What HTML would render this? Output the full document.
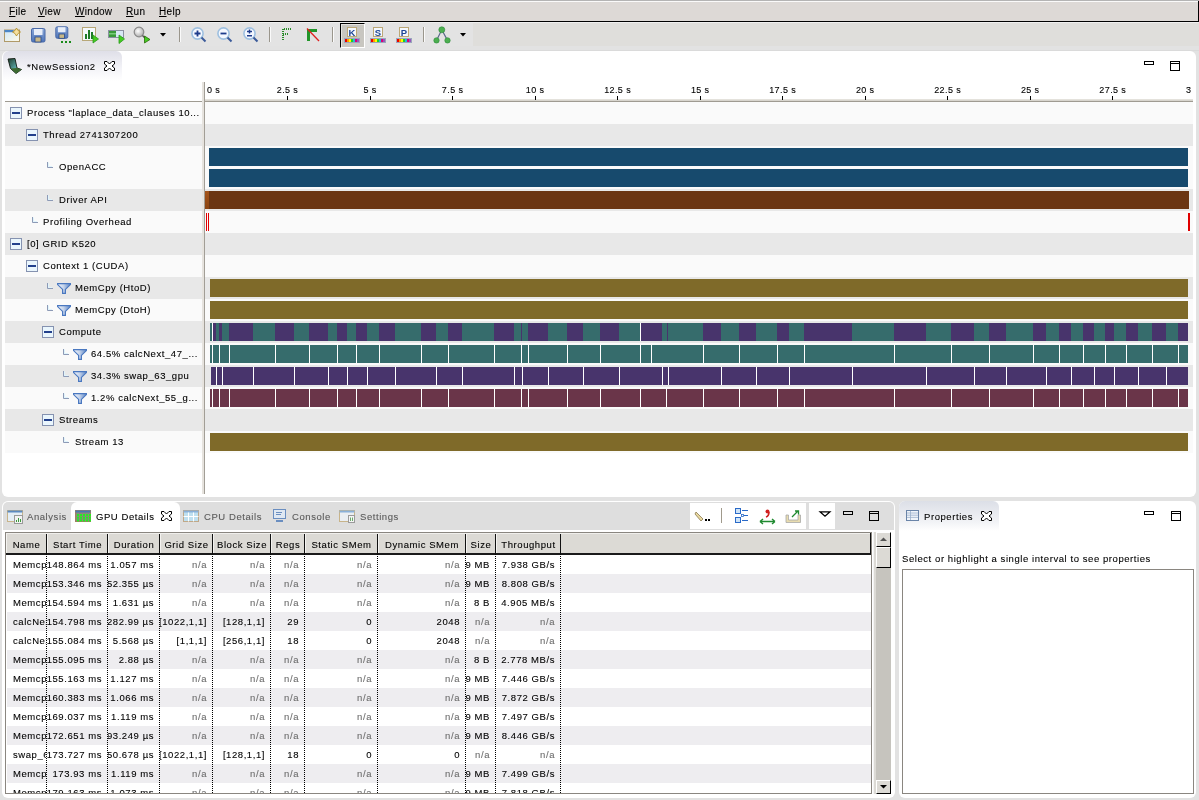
<!DOCTYPE html><html><head><meta charset="utf-8"><style>
html,body{margin:0;padding:0;}
body{width:1199px;height:800px;overflow:hidden;position:relative;background:#e2e2e2;font-family:"Liberation Sans",sans-serif;font-size:9.5px;letter-spacing:0.57px;color:#000;}
div{box-sizing:border-box;}
.t{position:absolute;white-space:pre;-webkit-text-stroke:0.1px currentColor;}
.wrap{position:absolute;left:0;top:0;width:1199px;height:800px;will-change:transform;}
svg{position:absolute;overflow:visible;}
</style></head><body><div class="wrap">
<div style="position:absolute;left:0px;top:0px;width:1199px;height:22px;background:#ddd9d6;"></div>
<div style="position:absolute;left:0px;top:0px;width:1199px;height:1px;background:#b4b4b4;"></div>
<div style="position:absolute;left:0px;top:1px;width:1198px;height:1px;background:#fafafa;"></div>
<div style="position:absolute;left:1198px;top:1px;width:1px;height:21px;background:#000;"></div>
<div style="position:absolute;left:0px;top:21px;width:1199px;height:1px;background:#000;"></div>
<div style="position:absolute;left:0px;top:22px;width:1199px;height:1px;background:#f0f0f0;"></div>
<div class="t" style="left:9px;top:4.5px;height:14px;line-height:14px;font-size:10px;letter-spacing:0.3px;"><u>F</u>ile</div>
<div class="t" style="left:38px;top:4.5px;height:14px;line-height:14px;font-size:10px;letter-spacing:0.3px;"><u>V</u>iew</div>
<div class="t" style="left:75px;top:4.5px;height:14px;line-height:14px;font-size:10px;letter-spacing:0.3px;"><u>W</u>indow</div>
<div class="t" style="left:126px;top:4.5px;height:14px;line-height:14px;font-size:10px;letter-spacing:0.3px;"><u>R</u>un</div>
<div class="t" style="left:159px;top:4.5px;height:14px;line-height:14px;font-size:10px;letter-spacing:0.3px;"><u>H</u>elp</div>
<div style="position:absolute;left:0px;top:23px;width:473px;height:23px;background:#e3e3e3;"></div>
<div style="position:absolute;left:473px;top:23px;width:726px;height:23px;background:#dfdedb;"></div>
<div style="position:absolute;left:0px;top:50px;width:1199px;height:1px;background:#dadada;"></div>
<svg style="left:4px;top:28px" width="17" height="15" viewBox="0 0 17 15"><defs><linearGradient id="g1" x1="0" y1="0" x2="1" y2="1"><stop offset="0" stop-color="#cfe6f8"/><stop offset="1" stop-color="#fffbe8"/></linearGradient></defs><rect x="0.5" y="2" width="15" height="11.5" fill="url(#g1)" stroke="#b09a68"/><rect x="0.5" y="2" width="9" height="2.2" fill="#4a86c8"/><path d="M12.5 0 L14 2.5 L16.5 4 L14 5.5 L12.5 8 L11 5.5 L8.5 4 L11 2.5 Z" fill="#f4e0a0" stroke="#b08a20" stroke-width="0.8"/></svg>
<svg style="left:31px;top:28px" width="15" height="15" viewBox="0 0 15 15"><defs><linearGradient id="g2" x1="0" y1="0" x2="0" y2="1"><stop offset="0" stop-color="#8aa8d8"/><stop offset="1" stop-color="#4e74b8"/></linearGradient></defs><rect x="0.5" y="0.5" width="13.5" height="13.5" rx="1.5" fill="url(#g2)" stroke="#4a6aa8"/><rect x="3" y="1" width="8.5" height="6" fill="#e8eef8"/><rect x="4" y="9" width="6" height="5" fill="#c8b888" stroke="#2a4a88" stroke-width="0.8"/></svg>
<svg style="left:55px;top:26px" width="17" height="17" viewBox="0 0 17 17"><defs><linearGradient id="g3" x1="0" y1="0" x2="0" y2="1"><stop offset="0" stop-color="#8aa8d8"/><stop offset="1" stop-color="#4e74b8"/></linearGradient></defs><rect x="0.8" y="0.8" width="12" height="11.5" rx="1.5" fill="url(#g3)" stroke="#4a6aa8"/><rect x="3" y="1.2" width="7.5" height="5" fill="#e8eef8"/><rect x="4" y="8" width="5.5" height="4.3" fill="#c8b888" stroke="#2a4a88" stroke-width="0.8"/><rect x="6" y="15" width="2" height="2" fill="#1a8a1a"/><rect x="10" y="15" width="2" height="2" fill="#1a8a1a"/><rect x="14" y="15" width="2" height="2" fill="#1a8a1a"/></svg>
<svg style="left:82px;top:27px" width="17" height="17" viewBox="0 0 17 17"><rect x="0.5" y="0.5" width="13" height="13" fill="#f4f8fc" stroke="#b8a878"/><rect x="3" y="7" width="2" height="5" fill="#1e7a28"/><rect x="6" y="3" width="2" height="9" fill="#1e7a28"/><rect x="9" y="5" width="2" height="7" fill="#1e7a28"/><path d="M11 8 L16.5 12 L11 16 Z" fill="#44cc22" stroke="#2a9a1a" stroke-width="0.8"/></svg>
<svg style="left:108px;top:30px" width="17" height="14" viewBox="0 0 17 14"><rect x="0.5" y="0.5" width="15" height="7" fill="#d8e8f4" stroke="#8a90a0"/><rect x="1" y="1" width="7" height="6" fill="#3a9a3a"/><rect x="1" y="3" width="7" height="1.5" fill="#7acc7a"/><path d="M11 5 L16.5 9 L11 13.5 Z" fill="#44cc22" stroke="#2a9a1a" stroke-width="0.8"/></svg>
<svg style="left:133px;top:26px" width="18" height="18" viewBox="0 0 18 18"><defs><radialGradient id="g4" cx="0.4" cy="0.4" r="0.6"><stop offset="0" stop-color="#fff"/><stop offset="1" stop-color="#b0b0b0"/></radialGradient></defs><circle cx="6" cy="6" r="4.8" fill="url(#g4)" stroke="#8a8a8a" stroke-width="1.2"/><path d="M9.5 9.5 L12 12" stroke="#555" stroke-width="1.5"/><path d="M11.5 10 L17 13.5 L11.5 17 Z" fill="#44cc22" stroke="#2a6a0a" stroke-width="0.8"/></svg>
<svg style="left:160px;top:33px" width="7" height="4" viewBox="0 0 7 4"><path d="M0 0 H6 L3 3.5 Z" fill="#000"/></svg>
<div style="position:absolute;left:179px;top:27px;width:2px;height:15px;border-left:1px solid #9a968c;background:#fafafa;width:2px;"></div>
<div style="position:absolute;left:269px;top:27px;width:2px;height:15px;border-left:1px solid #9a968c;background:#fafafa;width:2px;"></div>
<div style="position:absolute;left:332px;top:27px;width:2px;height:15px;border-left:1px solid #9a968c;background:#fafafa;width:2px;"></div>
<div style="position:absolute;left:423px;top:27px;width:2px;height:15px;border-left:1px solid #9a968c;background:#fafafa;width:2px;"></div>
<svg style="left:191px;top:27px" width="16" height="16" viewBox="0 0 16 16"><circle cx="6.5" cy="6.5" r="5.6" fill="#f4f8ff" stroke="#9ec0e0" stroke-width="1.6"/><path d="M10.5 10.5 L14.5 14.5" stroke="#3a5a9a" stroke-width="2"/><path d="M3.5 6.5 H9.5 M6.5 3.5 V9.5" stroke="#1e3c8c" stroke-width="1.8"/></svg>
<svg style="left:217px;top:27px" width="16" height="16" viewBox="0 0 16 16"><circle cx="6.5" cy="6.5" r="5.6" fill="#f4f8ff" stroke="#9ec0e0" stroke-width="1.6"/><path d="M10.5 10.5 L14.5 14.5" stroke="#3a5a9a" stroke-width="2"/><path d="M3.5 6.5 H9.5" stroke="#1e3c8c" stroke-width="1.8"/></svg>
<svg style="left:243px;top:27px" width="16" height="16" viewBox="0 0 16 16"><circle cx="6.5" cy="6.5" r="5.6" fill="#f4f8ff" stroke="#9ec0e0" stroke-width="1.6"/><path d="M10.5 10.5 L14.5 14.5" stroke="#3a5a9a" stroke-width="2"/><path d="M4 4.5 H9 M6.5 2.5 V6.5 M4 8.8 H9" stroke="#1e3c8c" stroke-width="1.5"/></svg>
<svg style="left:282px;top:28px" width="11" height="13" viewBox="0 0 11 13"><path d="M1 12 V1 H10" fill="none" stroke="#2a8a2a" stroke-width="2" stroke-dasharray="1 1"/><path d="M1 6 H6" stroke="#2a8a2a" stroke-width="2" stroke-dasharray="1 1"/></svg>
<svg style="left:306px;top:28px" width="14" height="14" viewBox="0 0 14 14"><path d="M2.5 13 V2.5 H11" fill="none" stroke="#22962a" stroke-width="3"/><path d="M1 0.5 L13 13" stroke="#e02020" stroke-width="1.3"/></svg>
<div style="position:absolute;left:340px;top:23px;width:25px;height:25px;background:#c8c6c0;border-top:1px solid #000;border-left:1px solid #000;border-right:1px solid #fff;border-bottom:1px solid #fff;box-shadow:inset 1px 1px 0 #e6e4e0;"></div>
<svg style="left:344px;top:27px" width="17" height="17" viewBox="0 0 17 17"><rect x="3.5" y="0.5" width="9" height="9" fill="#f4f8fe" stroke="#bca878"/><text x="8" y="8.6" text-anchor="middle" font-family="Liberation Sans" font-weight="bold" font-size="9.5" fill="#1e4696" style="letter-spacing:0">K</text><rect x="0.5" y="11.5" width="15" height="4" fill="#8a98b4" stroke="#9aa6bc" stroke-width="1"/><rect x="1" y="12" width="2" height="3" fill="#e00"/><rect x="3" y="12" width="2" height="3" fill="#f90"/><rect x="5" y="12" width="2" height="3" fill="#ff0"/><rect x="7" y="12" width="2" height="3" fill="#2c2"/><rect x="9" y="12" width="2" height="3" fill="#2bd"/><rect x="11" y="12" width="2" height="3" fill="#d07"/><rect x="13" y="12" width="2" height="3" fill="#95b"/></svg>
<svg style="left:370px;top:27px" width="17" height="17" viewBox="0 0 17 17"><rect x="3.5" y="0.5" width="9" height="9" fill="#f4f8fe" stroke="#bca878"/><text x="8" y="8.6" text-anchor="middle" font-family="Liberation Sans" font-weight="bold" font-size="9.5" fill="#1e4696" style="letter-spacing:0">S</text><rect x="0.5" y="11.5" width="15" height="4" fill="#8a98b4" stroke="#9aa6bc" stroke-width="1"/><rect x="1" y="12" width="2" height="3" fill="#e00"/><rect x="3" y="12" width="2" height="3" fill="#f90"/><rect x="5" y="12" width="2" height="3" fill="#ff0"/><rect x="7" y="12" width="2" height="3" fill="#2c2"/><rect x="9" y="12" width="2" height="3" fill="#2bd"/><rect x="11" y="12" width="2" height="3" fill="#d07"/><rect x="13" y="12" width="2" height="3" fill="#95b"/></svg>
<svg style="left:396px;top:27px" width="17" height="17" viewBox="0 0 17 17"><rect x="3.5" y="0.5" width="9" height="9" fill="#f4f8fe" stroke="#bca878"/><text x="8" y="8.6" text-anchor="middle" font-family="Liberation Sans" font-weight="bold" font-size="9.5" fill="#1e4696" style="letter-spacing:0">P</text><rect x="0.5" y="11.5" width="15" height="4" fill="#8a98b4" stroke="#9aa6bc" stroke-width="1"/><rect x="1" y="12" width="2" height="3" fill="#e00"/><rect x="3" y="12" width="2" height="3" fill="#f90"/><rect x="5" y="12" width="2" height="3" fill="#ff0"/><rect x="7" y="12" width="2" height="3" fill="#2c2"/><rect x="9" y="12" width="2" height="3" fill="#2bd"/><rect x="11" y="12" width="2" height="3" fill="#d07"/><rect x="13" y="12" width="2" height="3" fill="#95b"/></svg>
<svg style="left:432px;top:25px" width="18" height="19" viewBox="0 0 18 19"><path d="M9.8 4.8 L4.5 15.4 M9.8 4.8 L15.5 15.4" stroke="#5a6a8a" stroke-width="1.2"/><circle cx="9.8" cy="4.8" r="3" fill="#4caf50" stroke="#2e8a3a" stroke-width="0.6"/><circle cx="4.5" cy="15.4" r="2.7" fill="#4caf50" stroke="#2e8a3a" stroke-width="0.6"/><circle cx="15.5" cy="15.4" r="2.7" fill="#4caf50" stroke="#2e8a3a" stroke-width="0.6"/></svg>
<svg style="left:460px;top:33px" width="7" height="4" viewBox="0 0 7 4"><path d="M0 0 H6 L3 3.5 Z" fill="#000"/></svg>
<div style="position:absolute;left:2px;top:51px;width:1194px;height:446px;background:#fff;border-radius:6px;"></div>
<div style="position:absolute;left:3px;top:51px;width:119px;height:30px;border-radius:6px 6px 0 0;background:linear-gradient(#dfdfe8,#f4f4f8 60%,#fff);"></div>
<div class="t" style="left:27px;top:60px;height:14px;line-height:14px;">*NewSession2</div>
<svg style="left:7px;top:57px" width="16" height="18" viewBox="0 0 16 18"><defs><linearGradient id="lg" x1="0" y1="0" x2="1" y2="1"><stop offset="0" stop-color="#1e3a28"/><stop offset="0.6" stop-color="#5aa8a8"/><stop offset="1" stop-color="#8ad0a0"/></linearGradient></defs><path d="M1 2 L8 1.5 L10 11 L14.5 12.5 L9 16.5 L3.5 11.5 Z" fill="url(#lg)" stroke="#101810" stroke-width="0.9"/><path d="M3.8 11.6 L10 11 L14.5 12.5 L9 16.5 Z" fill="#3c6a30"/></svg>
<svg style="left:104px;top:61px" width="11" height="10" viewBox="0 0 11 10"><path d="M0.5 0.5 L3 0.5 L5.5 3 L8 0.5 L10.5 0.5 L10.5 3 L8 5 L10.5 7 L10.5 9.5 L8 9.5 L5.5 7 L3 9.5 L0.5 9.5 L0.5 7 L3 5 L0.5 3 Z" fill="#fff" stroke="#000" stroke-width="1"/></svg>
<div style="position:absolute;left:1144px;top:61px;width:10px;height:4px;border:1px solid #000;"></div>
<div style="position:absolute;left:1170px;top:61px;width:10px;height:10px;border:1px solid #000;"></div>
<div style="position:absolute;left:1171px;top:63px;width:8px;height:1px;background:#000;"></div>
<div style="position:absolute;left:204px;top:82px;width:1px;height:20px;background:#777;"></div>
<div style="position:absolute;left:205px;top:99px;width:988px;height:1px;background:#e4e2dc;"></div>
<div style="position:absolute;left:205px;top:100px;width:988px;height:1px;background:#d8d5ce;"></div>
<div style="position:absolute;left:5px;top:101px;width:1188px;height:1px;background:#9f9b92;"></div>
<div style="position:absolute;left:205px;top:80px;width:986px;height:20px;overflow:hidden;">
<div class="t" style="left:2px;top:3px;height:14px;line-height:14px;font-size:9px;letter-spacing:0.4px;">0 s</div>
<div style="position:absolute;left:82px;top:16px;width:1px;height:4px;background:#000;"></div>
<div class="t" style="left:42.5px;top:3px;width:80px;height:14px;line-height:14px;text-align:center;font-size:9px;letter-spacing:0.4px;">2.5 s</div>
<div style="position:absolute;left:165px;top:16px;width:1px;height:4px;background:#000;"></div>
<div class="t" style="left:125.1px;top:3px;width:80px;height:14px;line-height:14px;text-align:center;font-size:9px;letter-spacing:0.4px;">5 s</div>
<div style="position:absolute;left:247px;top:16px;width:1px;height:4px;background:#000;"></div>
<div class="t" style="left:207.6px;top:3px;width:80px;height:14px;line-height:14px;text-align:center;font-size:9px;letter-spacing:0.4px;">7.5 s</div>
<div style="position:absolute;left:330px;top:16px;width:1px;height:4px;background:#000;"></div>
<div class="t" style="left:290.1px;top:3px;width:80px;height:14px;line-height:14px;text-align:center;font-size:9px;letter-spacing:0.4px;">10 s</div>
<div style="position:absolute;left:412px;top:16px;width:1px;height:4px;background:#000;"></div>
<div class="t" style="left:372.6px;top:3px;width:80px;height:14px;line-height:14px;text-align:center;font-size:9px;letter-spacing:0.4px;">12.5 s</div>
<div style="position:absolute;left:495px;top:16px;width:1px;height:4px;background:#000;"></div>
<div class="t" style="left:455.2px;top:3px;width:80px;height:14px;line-height:14px;text-align:center;font-size:9px;letter-spacing:0.4px;">15 s</div>
<div style="position:absolute;left:577px;top:16px;width:1px;height:4px;background:#000;"></div>
<div class="t" style="left:537.7px;top:3px;width:80px;height:14px;line-height:14px;text-align:center;font-size:9px;letter-spacing:0.4px;">17.5 s</div>
<div style="position:absolute;left:660px;top:16px;width:1px;height:4px;background:#000;"></div>
<div class="t" style="left:620.2px;top:3px;width:80px;height:14px;line-height:14px;text-align:center;font-size:9px;letter-spacing:0.4px;">20 s</div>
<div style="position:absolute;left:742px;top:16px;width:1px;height:4px;background:#000;"></div>
<div class="t" style="left:702.7px;top:3px;width:80px;height:14px;line-height:14px;text-align:center;font-size:9px;letter-spacing:0.4px;">22.5 s</div>
<div style="position:absolute;left:825px;top:16px;width:1px;height:4px;background:#000;"></div>
<div class="t" style="left:785.2px;top:3px;width:80px;height:14px;line-height:14px;text-align:center;font-size:9px;letter-spacing:0.4px;">25 s</div>
<div style="position:absolute;left:907px;top:16px;width:1px;height:4px;background:#000;"></div>
<div class="t" style="left:867.8px;top:3px;width:80px;height:14px;line-height:14px;text-align:center;font-size:9px;letter-spacing:0.4px;">27.5 s</div>
<div style="position:absolute;left:990px;top:16px;width:1px;height:4px;background:#000;"></div>
<div class="t" style="left:950.3px;top:3px;width:80px;height:14px;line-height:14px;text-align:center;font-size:9px;letter-spacing:0.4px;">30 s</div>
</div>
<div style="position:absolute;left:5px;top:102px;width:197px;height:22px;background:#fafafa;"></div>
<div style="position:absolute;left:205px;top:102px;width:988px;height:22px;background:#fafafa;"></div>
<div style="position:absolute;left:10px;top:107px;width:12px;height:12px;border:1px solid #8592b0;background:#eaf6fd;"><div style="position:absolute;left:1px;top:4px;width:8px;height:2px;background:#22408c;"></div></div>
<div class="t" style="left:27px;top:106px;height:14px;line-height:14px;">Process "laplace_data_clauses 10...</div>
<div style="position:absolute;left:5px;top:124px;width:197px;height:22px;background:#e8e8e8;"></div>
<div style="position:absolute;left:205px;top:124px;width:988px;height:22px;background:#e8e8e8;"></div>
<div style="position:absolute;left:26px;top:129px;width:12px;height:12px;border:1px solid #8592b0;background:#eaf6fd;"><div style="position:absolute;left:1px;top:4px;width:8px;height:2px;background:#22408c;"></div></div>
<div class="t" style="left:43px;top:128px;height:14px;line-height:14px;">Thread 2741307200</div>
<div style="position:absolute;left:5px;top:146px;width:197px;height:43px;background:#fafafa;"></div>
<div style="position:absolute;left:205px;top:146px;width:988px;height:43px;background:#fafafa;"></div>
<svg style="left:46px;top:161px" width="8" height="8" viewBox="0 0 8 8"><path d="M1.5 1 V6.5 H7" fill="none" stroke="#8d9ab6" stroke-width="1"/><path d="M2.5 1.5 V5.5 H6" fill="none" stroke="#dff4fc" stroke-width="1"/></svg>
<div class="t" style="left:59px;top:160px;height:14px;line-height:14px;">OpenACC</div>
<div style="position:absolute;left:5px;top:189px;width:197px;height:22px;background:#e8e8e8;"></div>
<div style="position:absolute;left:205px;top:189px;width:988px;height:22px;background:#e8e8e8;"></div>
<svg style="left:46px;top:194px" width="8" height="8" viewBox="0 0 8 8"><path d="M1.5 1 V6.5 H7" fill="none" stroke="#8d9ab6" stroke-width="1"/><path d="M2.5 1.5 V5.5 H6" fill="none" stroke="#dff4fc" stroke-width="1"/></svg>
<div class="t" style="left:59px;top:193px;height:14px;line-height:14px;">Driver API</div>
<div style="position:absolute;left:5px;top:211px;width:197px;height:22px;background:#fafafa;"></div>
<div style="position:absolute;left:205px;top:211px;width:988px;height:22px;background:#fafafa;"></div>
<svg style="left:31px;top:216px" width="8" height="8" viewBox="0 0 8 8"><path d="M1.5 1 V6.5 H7" fill="none" stroke="#8d9ab6" stroke-width="1"/><path d="M2.5 1.5 V5.5 H6" fill="none" stroke="#dff4fc" stroke-width="1"/></svg>
<div class="t" style="left:43px;top:215px;height:14px;line-height:14px;">Profiling Overhead</div>
<div style="position:absolute;left:5px;top:233px;width:197px;height:22px;background:#e8e8e8;"></div>
<div style="position:absolute;left:205px;top:233px;width:988px;height:22px;background:#e8e8e8;"></div>
<div style="position:absolute;left:10px;top:238px;width:12px;height:12px;border:1px solid #8592b0;background:#eaf6fd;"><div style="position:absolute;left:1px;top:4px;width:8px;height:2px;background:#22408c;"></div></div>
<div class="t" style="left:27px;top:237px;height:14px;line-height:14px;">[0] GRID K520</div>
<div style="position:absolute;left:5px;top:255px;width:197px;height:22px;background:#fafafa;"></div>
<div style="position:absolute;left:205px;top:255px;width:988px;height:22px;background:#fafafa;"></div>
<div style="position:absolute;left:26px;top:260px;width:12px;height:12px;border:1px solid #8592b0;background:#eaf6fd;"><div style="position:absolute;left:1px;top:4px;width:8px;height:2px;background:#22408c;"></div></div>
<div class="t" style="left:43px;top:259px;height:14px;line-height:14px;">Context 1 (CUDA)</div>
<div style="position:absolute;left:5px;top:277px;width:197px;height:22px;background:#e8e8e8;"></div>
<div style="position:absolute;left:205px;top:277px;width:988px;height:22px;background:#e8e8e8;"></div>
<svg style="left:46px;top:282px" width="8" height="8" viewBox="0 0 8 8"><path d="M1.5 1 V6.5 H7" fill="none" stroke="#8d9ab6" stroke-width="1"/><path d="M2.5 1.5 V5.5 H6" fill="none" stroke="#dff4fc" stroke-width="1"/></svg>
<svg style="left:57px;top:283px" width="15" height="12" viewBox="0 0 15 12"><defs><linearGradient id="fg277" x1="0" x2="1"><stop offset="0" stop-color="#eef2fa"/><stop offset="0.45" stop-color="#c8d6ec"/><stop offset="1" stop-color="#5a84c4"/></linearGradient></defs><path d="M0.6 0.6 H13.4 V1.6 L8.4 6.4 V10.4 H5.6 V6.4 L0.6 1.6 Z" fill="url(#fg277)" stroke="#4a78c0" stroke-width="1.2" stroke-linejoin="miter"/></svg>
<div class="t" style="left:75px;top:281px;height:14px;line-height:14px;">MemCpy (HtoD)</div>
<div style="position:absolute;left:5px;top:299px;width:197px;height:22px;background:#fafafa;"></div>
<div style="position:absolute;left:205px;top:299px;width:988px;height:22px;background:#fafafa;"></div>
<svg style="left:46px;top:304px" width="8" height="8" viewBox="0 0 8 8"><path d="M1.5 1 V6.5 H7" fill="none" stroke="#8d9ab6" stroke-width="1"/><path d="M2.5 1.5 V5.5 H6" fill="none" stroke="#dff4fc" stroke-width="1"/></svg>
<svg style="left:57px;top:305px" width="15" height="12" viewBox="0 0 15 12"><defs><linearGradient id="fg299" x1="0" x2="1"><stop offset="0" stop-color="#eef2fa"/><stop offset="0.45" stop-color="#c8d6ec"/><stop offset="1" stop-color="#5a84c4"/></linearGradient></defs><path d="M0.6 0.6 H13.4 V1.6 L8.4 6.4 V10.4 H5.6 V6.4 L0.6 1.6 Z" fill="url(#fg299)" stroke="#4a78c0" stroke-width="1.2" stroke-linejoin="miter"/></svg>
<div class="t" style="left:75px;top:303px;height:14px;line-height:14px;">MemCpy (DtoH)</div>
<div style="position:absolute;left:5px;top:321px;width:197px;height:22px;background:#e8e8e8;"></div>
<div style="position:absolute;left:205px;top:321px;width:988px;height:22px;background:#e8e8e8;"></div>
<div style="position:absolute;left:42px;top:326px;width:12px;height:12px;border:1px solid #8592b0;background:#eaf6fd;"><div style="position:absolute;left:1px;top:4px;width:8px;height:2px;background:#22408c;"></div></div>
<div class="t" style="left:59px;top:325px;height:14px;line-height:14px;">Compute</div>
<div style="position:absolute;left:5px;top:343px;width:197px;height:22px;background:#fafafa;"></div>
<div style="position:absolute;left:205px;top:343px;width:988px;height:22px;background:#fafafa;"></div>
<svg style="left:62px;top:348px" width="8" height="8" viewBox="0 0 8 8"><path d="M1.5 1 V6.5 H7" fill="none" stroke="#8d9ab6" stroke-width="1"/><path d="M2.5 1.5 V5.5 H6" fill="none" stroke="#dff4fc" stroke-width="1"/></svg>
<svg style="left:73px;top:349px" width="15" height="12" viewBox="0 0 15 12"><defs><linearGradient id="fg343" x1="0" x2="1"><stop offset="0" stop-color="#eef2fa"/><stop offset="0.45" stop-color="#c8d6ec"/><stop offset="1" stop-color="#5a84c4"/></linearGradient></defs><path d="M0.6 0.6 H13.4 V1.6 L8.4 6.4 V10.4 H5.6 V6.4 L0.6 1.6 Z" fill="url(#fg343)" stroke="#4a78c0" stroke-width="1.2" stroke-linejoin="miter"/></svg>
<div class="t" style="left:91px;top:347px;height:14px;line-height:14px;">64.5% calcNext_47_...</div>
<div style="position:absolute;left:5px;top:365px;width:197px;height:22px;background:#e8e8e8;"></div>
<div style="position:absolute;left:205px;top:365px;width:988px;height:22px;background:#e8e8e8;"></div>
<svg style="left:62px;top:370px" width="8" height="8" viewBox="0 0 8 8"><path d="M1.5 1 V6.5 H7" fill="none" stroke="#8d9ab6" stroke-width="1"/><path d="M2.5 1.5 V5.5 H6" fill="none" stroke="#dff4fc" stroke-width="1"/></svg>
<svg style="left:73px;top:371px" width="15" height="12" viewBox="0 0 15 12"><defs><linearGradient id="fg365" x1="0" x2="1"><stop offset="0" stop-color="#eef2fa"/><stop offset="0.45" stop-color="#c8d6ec"/><stop offset="1" stop-color="#5a84c4"/></linearGradient></defs><path d="M0.6 0.6 H13.4 V1.6 L8.4 6.4 V10.4 H5.6 V6.4 L0.6 1.6 Z" fill="url(#fg365)" stroke="#4a78c0" stroke-width="1.2" stroke-linejoin="miter"/></svg>
<div class="t" style="left:91px;top:369px;height:14px;line-height:14px;">34.3% swap_63_gpu</div>
<div style="position:absolute;left:5px;top:387px;width:197px;height:22px;background:#fafafa;"></div>
<div style="position:absolute;left:205px;top:387px;width:988px;height:22px;background:#fafafa;"></div>
<svg style="left:62px;top:392px" width="8" height="8" viewBox="0 0 8 8"><path d="M1.5 1 V6.5 H7" fill="none" stroke="#8d9ab6" stroke-width="1"/><path d="M2.5 1.5 V5.5 H6" fill="none" stroke="#dff4fc" stroke-width="1"/></svg>
<svg style="left:73px;top:393px" width="15" height="12" viewBox="0 0 15 12"><defs><linearGradient id="fg387" x1="0" x2="1"><stop offset="0" stop-color="#eef2fa"/><stop offset="0.45" stop-color="#c8d6ec"/><stop offset="1" stop-color="#5a84c4"/></linearGradient></defs><path d="M0.6 0.6 H13.4 V1.6 L8.4 6.4 V10.4 H5.6 V6.4 L0.6 1.6 Z" fill="url(#fg387)" stroke="#4a78c0" stroke-width="1.2" stroke-linejoin="miter"/></svg>
<div class="t" style="left:91px;top:391px;height:14px;line-height:14px;">1.2% calcNext_55_g...</div>
<div style="position:absolute;left:5px;top:409px;width:197px;height:22px;background:#e8e8e8;"></div>
<div style="position:absolute;left:205px;top:409px;width:988px;height:22px;background:#e8e8e8;"></div>
<div style="position:absolute;left:42px;top:414px;width:12px;height:12px;border:1px solid #8592b0;background:#eaf6fd;"><div style="position:absolute;left:1px;top:4px;width:8px;height:2px;background:#22408c;"></div></div>
<div class="t" style="left:59px;top:413px;height:14px;line-height:14px;">Streams</div>
<div style="position:absolute;left:5px;top:431px;width:197px;height:22px;background:#fafafa;"></div>
<div style="position:absolute;left:205px;top:431px;width:988px;height:22px;background:#fafafa;"></div>
<svg style="left:62px;top:436px" width="8" height="8" viewBox="0 0 8 8"><path d="M1.5 1 V6.5 H7" fill="none" stroke="#8d9ab6" stroke-width="1"/><path d="M2.5 1.5 V5.5 H6" fill="none" stroke="#dff4fc" stroke-width="1"/></svg>
<div class="t" style="left:75px;top:435px;height:14px;line-height:14px;">Stream 13</div>
<div style="position:absolute;left:202px;top:82px;width:2px;height:412px;background:#e6e3de;"></div>
<div style="position:absolute;left:204px;top:82px;width:1px;height:412px;background:#a29e96;"></div>
<div style="position:absolute;left:209px;top:148px;width:979px;height:18px;background:#174a6d;"></div>
<div style="position:absolute;left:209px;top:169px;width:979px;height:18px;background:#174a6d;"></div>
<div style="position:absolute;left:205px;top:191px;width:984px;height:18px;background:#6b3512;"></div>
<div style="position:absolute;left:205px;top:191px;width:4px;height:18px;background:linear-gradient(#a4541a,#8a4412);"></div>
<div style="position:absolute;left:206px;top:213px;width:1px;height:18px;background:#e00000;"></div>
<div style="position:absolute;left:208px;top:213px;width:1px;height:18px;background:#e00000;"></div>
<div style="position:absolute;left:1188px;top:213px;width:2px;height:18px;background:#e00000;"></div>
<div style="position:absolute;left:210px;top:279px;width:978px;height:18px;background:#7f6a29;"></div>
<div style="position:absolute;left:210px;top:301px;width:978px;height:18px;background:#7f6a29;"></div>
<div style="position:absolute;left:210px;top:433px;width:978px;height:18px;background:#7f6a29;"></div>
<div style="position:absolute;left:210px;top:345px;width:978px;height:18px;background:#366c6c;"></div>
<div style="position:absolute;left:212px;top:345px;width:1px;height:18px;background:#fff;"></div>
<div style="position:absolute;left:219px;top:345px;width:1px;height:18px;background:#fff;"></div>
<div style="position:absolute;left:229px;top:345px;width:1px;height:18px;background:#fff;"></div>
<div style="position:absolute;left:275px;top:345px;width:1px;height:18px;background:#fff;"></div>
<div style="position:absolute;left:309px;top:345px;width:1px;height:18px;background:#fff;"></div>
<div style="position:absolute;left:337px;top:345px;width:1px;height:18px;background:#fff;"></div>
<div style="position:absolute;left:356px;top:345px;width:1px;height:18px;background:#fff;"></div>
<div style="position:absolute;left:379px;top:345px;width:1px;height:18px;background:#fff;"></div>
<div style="position:absolute;left:421px;top:345px;width:1px;height:18px;background:#fff;"></div>
<div style="position:absolute;left:448px;top:345px;width:1px;height:18px;background:#fff;"></div>
<div style="position:absolute;left:494px;top:345px;width:1px;height:18px;background:#fff;"></div>
<div style="position:absolute;left:521px;top:345px;width:1px;height:18px;background:#fff;"></div>
<div style="position:absolute;left:528px;top:345px;width:1px;height:18px;background:#fff;"></div>
<div style="position:absolute;left:567px;top:345px;width:1px;height:18px;background:#fff;"></div>
<div style="position:absolute;left:600px;top:345px;width:1px;height:18px;background:#fff;"></div>
<div style="position:absolute;left:640px;top:345px;width:1px;height:18px;background:#fff;"></div>
<div style="position:absolute;left:651px;top:345px;width:1px;height:18px;background:#fff;"></div>
<div style="position:absolute;left:703px;top:345px;width:1px;height:18px;background:#fff;"></div>
<div style="position:absolute;left:739px;top:345px;width:1px;height:18px;background:#fff;"></div>
<div style="position:absolute;left:777px;top:345px;width:1px;height:18px;background:#fff;"></div>
<div style="position:absolute;left:804px;top:345px;width:1px;height:18px;background:#fff;"></div>
<div style="position:absolute;left:894px;top:345px;width:1px;height:18px;background:#fff;"></div>
<div style="position:absolute;left:951px;top:345px;width:1px;height:18px;background:#fff;"></div>
<div style="position:absolute;left:989px;top:345px;width:1px;height:18px;background:#fff;"></div>
<div style="position:absolute;left:1033px;top:345px;width:1px;height:18px;background:#fff;"></div>
<div style="position:absolute;left:1059px;top:345px;width:1px;height:18px;background:#fff;"></div>
<div style="position:absolute;left:1083px;top:345px;width:1px;height:18px;background:#fff;"></div>
<div style="position:absolute;left:1105px;top:345px;width:1px;height:18px;background:#fff;"></div>
<div style="position:absolute;left:1126px;top:345px;width:1px;height:18px;background:#fff;"></div>
<div style="position:absolute;left:1152px;top:345px;width:1px;height:18px;background:#fff;"></div>
<div style="position:absolute;left:1178px;top:345px;width:1px;height:18px;background:#fff;"></div>
<div style="position:absolute;left:211px;top:367px;width:977px;height:18px;background:#48346c;"></div>
<div style="position:absolute;left:216px;top:367px;width:1px;height:18px;background:#fff;"></div>
<div style="position:absolute;left:222px;top:367px;width:1px;height:18px;background:#fff;"></div>
<div style="position:absolute;left:253px;top:367px;width:1px;height:18px;background:#fff;"></div>
<div style="position:absolute;left:294px;top:367px;width:1px;height:18px;background:#fff;"></div>
<div style="position:absolute;left:328px;top:367px;width:1px;height:18px;background:#fff;"></div>
<div style="position:absolute;left:347px;top:367px;width:1px;height:18px;background:#fff;"></div>
<div style="position:absolute;left:367px;top:367px;width:1px;height:18px;background:#fff;"></div>
<div style="position:absolute;left:395px;top:367px;width:1px;height:18px;background:#fff;"></div>
<div style="position:absolute;left:436px;top:367px;width:1px;height:18px;background:#fff;"></div>
<div style="position:absolute;left:462px;top:367px;width:1px;height:18px;background:#fff;"></div>
<div style="position:absolute;left:514px;top:367px;width:1px;height:18px;background:#fff;"></div>
<div style="position:absolute;left:522px;top:367px;width:1px;height:18px;background:#fff;"></div>
<div style="position:absolute;left:548px;top:367px;width:1px;height:18px;background:#fff;"></div>
<div style="position:absolute;left:583px;top:367px;width:1px;height:18px;background:#fff;"></div>
<div style="position:absolute;left:619px;top:367px;width:1px;height:18px;background:#fff;"></div>
<div style="position:absolute;left:662px;top:367px;width:1px;height:18px;background:#fff;"></div>
<div style="position:absolute;left:668px;top:367px;width:1px;height:18px;background:#fff;"></div>
<div style="position:absolute;left:721px;top:367px;width:1px;height:18px;background:#fff;"></div>
<div style="position:absolute;left:756px;top:367px;width:1px;height:18px;background:#fff;"></div>
<div style="position:absolute;left:789px;top:367px;width:1px;height:18px;background:#fff;"></div>
<div style="position:absolute;left:852px;top:367px;width:1px;height:18px;background:#fff;"></div>
<div style="position:absolute;left:926px;top:367px;width:1px;height:18px;background:#fff;"></div>
<div style="position:absolute;left:974px;top:367px;width:1px;height:18px;background:#fff;"></div>
<div style="position:absolute;left:1006px;top:367px;width:1px;height:18px;background:#fff;"></div>
<div style="position:absolute;left:1046px;top:367px;width:1px;height:18px;background:#fff;"></div>
<div style="position:absolute;left:1071px;top:367px;width:1px;height:18px;background:#fff;"></div>
<div style="position:absolute;left:1094px;top:367px;width:1px;height:18px;background:#fff;"></div>
<div style="position:absolute;left:1114px;top:367px;width:1px;height:18px;background:#fff;"></div>
<div style="position:absolute;left:1138px;top:367px;width:1px;height:18px;background:#fff;"></div>
<div style="position:absolute;left:1166px;top:367px;width:1px;height:18px;background:#fff;"></div>
<div style="position:absolute;left:210px;top:389px;width:978px;height:18px;background:#6a3549;"></div>
<div style="position:absolute;left:212px;top:389px;width:1px;height:18px;background:#fff;"></div>
<div style="position:absolute;left:219px;top:389px;width:1px;height:18px;background:#fff;"></div>
<div style="position:absolute;left:229px;top:389px;width:1px;height:18px;background:#fff;"></div>
<div style="position:absolute;left:275px;top:389px;width:1px;height:18px;background:#fff;"></div>
<div style="position:absolute;left:309px;top:389px;width:1px;height:18px;background:#fff;"></div>
<div style="position:absolute;left:337px;top:389px;width:1px;height:18px;background:#fff;"></div>
<div style="position:absolute;left:356px;top:389px;width:1px;height:18px;background:#fff;"></div>
<div style="position:absolute;left:379px;top:389px;width:1px;height:18px;background:#fff;"></div>
<div style="position:absolute;left:421px;top:389px;width:1px;height:18px;background:#fff;"></div>
<div style="position:absolute;left:448px;top:389px;width:1px;height:18px;background:#fff;"></div>
<div style="position:absolute;left:494px;top:389px;width:1px;height:18px;background:#fff;"></div>
<div style="position:absolute;left:521px;top:389px;width:1px;height:18px;background:#fff;"></div>
<div style="position:absolute;left:528px;top:389px;width:1px;height:18px;background:#fff;"></div>
<div style="position:absolute;left:567px;top:389px;width:1px;height:18px;background:#fff;"></div>
<div style="position:absolute;left:600px;top:389px;width:1px;height:18px;background:#fff;"></div>
<div style="position:absolute;left:640px;top:389px;width:1px;height:18px;background:#fff;"></div>
<div style="position:absolute;left:666px;top:389px;width:1px;height:18px;background:#fff;"></div>
<div style="position:absolute;left:703px;top:389px;width:1px;height:18px;background:#fff;"></div>
<div style="position:absolute;left:739px;top:389px;width:1px;height:18px;background:#fff;"></div>
<div style="position:absolute;left:777px;top:389px;width:1px;height:18px;background:#fff;"></div>
<div style="position:absolute;left:804px;top:389px;width:1px;height:18px;background:#fff;"></div>
<div style="position:absolute;left:894px;top:389px;width:1px;height:18px;background:#fff;"></div>
<div style="position:absolute;left:951px;top:389px;width:1px;height:18px;background:#fff;"></div>
<div style="position:absolute;left:989px;top:389px;width:1px;height:18px;background:#fff;"></div>
<div style="position:absolute;left:1033px;top:389px;width:1px;height:18px;background:#fff;"></div>
<div style="position:absolute;left:1059px;top:389px;width:1px;height:18px;background:#fff;"></div>
<div style="position:absolute;left:1083px;top:389px;width:1px;height:18px;background:#fff;"></div>
<div style="position:absolute;left:1105px;top:389px;width:1px;height:18px;background:#fff;"></div>
<div style="position:absolute;left:1126px;top:389px;width:1px;height:18px;background:#fff;"></div>
<div style="position:absolute;left:1152px;top:389px;width:1px;height:18px;background:#fff;"></div>
<div style="position:absolute;left:1178px;top:389px;width:1px;height:18px;background:#fff;"></div>
<div style="position:absolute;left:210px;top:323px;width:2px;height:18px;background:#366c6c;"></div>
<div style="position:absolute;left:212px;top:323px;width:4px;height:18px;background:#48346c;"></div>
<div style="position:absolute;left:216px;top:323px;width:3px;height:18px;background:#366c6c;"></div>
<div style="position:absolute;left:219px;top:323px;width:3px;height:18px;background:#48346c;"></div>
<div style="position:absolute;left:222px;top:323px;width:7px;height:18px;background:#366c6c;"></div>
<div style="position:absolute;left:229px;top:323px;width:24px;height:18px;background:#48346c;"></div>
<div style="position:absolute;left:253px;top:323px;width:22px;height:18px;background:#366c6c;"></div>
<div style="position:absolute;left:275px;top:323px;width:19px;height:18px;background:#48346c;"></div>
<div style="position:absolute;left:294px;top:323px;width:15px;height:18px;background:#366c6c;"></div>
<div style="position:absolute;left:309px;top:323px;width:19px;height:18px;background:#48346c;"></div>
<div style="position:absolute;left:328px;top:323px;width:9px;height:18px;background:#366c6c;"></div>
<div style="position:absolute;left:337px;top:323px;width:10px;height:18px;background:#48346c;"></div>
<div style="position:absolute;left:347px;top:323px;width:9px;height:18px;background:#366c6c;"></div>
<div style="position:absolute;left:356px;top:323px;width:11px;height:18px;background:#48346c;"></div>
<div style="position:absolute;left:367px;top:323px;width:12px;height:18px;background:#366c6c;"></div>
<div style="position:absolute;left:379px;top:323px;width:16px;height:18px;background:#48346c;"></div>
<div style="position:absolute;left:395px;top:323px;width:26px;height:18px;background:#366c6c;"></div>
<div style="position:absolute;left:421px;top:323px;width:15px;height:18px;background:#48346c;"></div>
<div style="position:absolute;left:436px;top:323px;width:12px;height:18px;background:#366c6c;"></div>
<div style="position:absolute;left:448px;top:323px;width:14px;height:18px;background:#48346c;"></div>
<div style="position:absolute;left:462px;top:323px;width:32px;height:18px;background:#366c6c;"></div>
<div style="position:absolute;left:494px;top:323px;width:20px;height:18px;background:#48346c;"></div>
<div style="position:absolute;left:514px;top:323px;width:7px;height:18px;background:#366c6c;"></div>
<div style="position:absolute;left:521px;top:323px;width:1px;height:18px;background:#48346c;"></div>
<div style="position:absolute;left:522px;top:323px;width:6px;height:18px;background:#366c6c;"></div>
<div style="position:absolute;left:528px;top:323px;width:20px;height:18px;background:#48346c;"></div>
<div style="position:absolute;left:548px;top:323px;width:19px;height:18px;background:#366c6c;"></div>
<div style="position:absolute;left:567px;top:323px;width:16px;height:18px;background:#48346c;"></div>
<div style="position:absolute;left:583px;top:323px;width:17px;height:18px;background:#366c6c;"></div>
<div style="position:absolute;left:600px;top:323px;width:19px;height:18px;background:#48346c;"></div>
<div style="position:absolute;left:619px;top:323px;width:21px;height:18px;background:#366c6c;"></div>
<div style="position:absolute;left:640px;top:323px;width:22px;height:18px;background:#48346c;"></div>
<div style="position:absolute;left:662px;top:323px;width:5px;height:18px;background:#366c6c;"></div>
<div style="position:absolute;left:667px;top:323px;width:1px;height:18px;background:#48346c;"></div>
<div style="position:absolute;left:668px;top:323px;width:35px;height:18px;background:#366c6c;"></div>
<div style="position:absolute;left:703px;top:323px;width:18px;height:18px;background:#48346c;"></div>
<div style="position:absolute;left:721px;top:323px;width:18px;height:18px;background:#366c6c;"></div>
<div style="position:absolute;left:739px;top:323px;width:17px;height:18px;background:#48346c;"></div>
<div style="position:absolute;left:756px;top:323px;width:21px;height:18px;background:#366c6c;"></div>
<div style="position:absolute;left:777px;top:323px;width:12px;height:18px;background:#48346c;"></div>
<div style="position:absolute;left:789px;top:323px;width:15px;height:18px;background:#366c6c;"></div>
<div style="position:absolute;left:804px;top:323px;width:48px;height:18px;background:#48346c;"></div>
<div style="position:absolute;left:852px;top:323px;width:42px;height:18px;background:#366c6c;"></div>
<div style="position:absolute;left:894px;top:323px;width:32px;height:18px;background:#48346c;"></div>
<div style="position:absolute;left:926px;top:323px;width:25px;height:18px;background:#366c6c;"></div>
<div style="position:absolute;left:951px;top:323px;width:23px;height:18px;background:#48346c;"></div>
<div style="position:absolute;left:974px;top:323px;width:15px;height:18px;background:#366c6c;"></div>
<div style="position:absolute;left:989px;top:323px;width:17px;height:18px;background:#48346c;"></div>
<div style="position:absolute;left:1006px;top:323px;width:27px;height:18px;background:#366c6c;"></div>
<div style="position:absolute;left:1033px;top:323px;width:13px;height:18px;background:#48346c;"></div>
<div style="position:absolute;left:1046px;top:323px;width:13px;height:18px;background:#366c6c;"></div>
<div style="position:absolute;left:1059px;top:323px;width:12px;height:18px;background:#48346c;"></div>
<div style="position:absolute;left:1071px;top:323px;width:12px;height:18px;background:#366c6c;"></div>
<div style="position:absolute;left:1083px;top:323px;width:11px;height:18px;background:#48346c;"></div>
<div style="position:absolute;left:1094px;top:323px;width:11px;height:18px;background:#366c6c;"></div>
<div style="position:absolute;left:1105px;top:323px;width:9px;height:18px;background:#48346c;"></div>
<div style="position:absolute;left:1114px;top:323px;width:12px;height:18px;background:#366c6c;"></div>
<div style="position:absolute;left:1126px;top:323px;width:12px;height:18px;background:#48346c;"></div>
<div style="position:absolute;left:1138px;top:323px;width:14px;height:18px;background:#366c6c;"></div>
<div style="position:absolute;left:1152px;top:323px;width:14px;height:18px;background:#48346c;"></div>
<div style="position:absolute;left:1166px;top:323px;width:12px;height:18px;background:#366c6c;"></div>
<div style="position:absolute;left:1178px;top:323px;width:10px;height:18px;background:#48346c;"></div>
<div style="position:absolute;left:212px;top:323px;width:1px;height:18px;background:#fff;"></div>
<div style="position:absolute;left:640px;top:323px;width:1px;height:18px;background:#fff;"></div>
<div style="position:absolute;left:2px;top:501px;width:893px;height:297px;background:#fff;border-radius:6px;"></div>
<div style="position:absolute;left:3px;top:502px;width:891px;height:28px;background:#dedede;border-radius:5px 5px 0 0;"></div>
<div style="position:absolute;left:71px;top:502px;width:109px;height:28px;background:#fff;border-radius:6px 6px 0 0;"></div>
<div style="position:absolute;left:690px;top:503px;width:116px;height:26px;background:#fff;"></div>
<div style="position:absolute;left:809px;top:503px;width:26px;height:26px;background:#fff;"></div>
<div class="t" style="left:27px;top:510px;height:14px;line-height:14px;color:#5b5b5b;">Analysis</div>
<div class="t" style="left:96px;top:510px;height:14px;line-height:14px;">GPU Details</div>
<div class="t" style="left:204px;top:510px;height:14px;line-height:14px;color:#5b5b5b;">CPU Details</div>
<div class="t" style="left:292px;top:510px;height:14px;line-height:14px;color:#5b5b5b;">Console</div>
<div class="t" style="left:360px;top:510px;height:14px;line-height:14px;color:#5b5b5b;">Settings</div>
<svg style="left:7px;top:510px" width="17" height="14" viewBox="0 0 17 14"><rect x="0.5" y="0.5" width="15" height="11" fill="#e4eef6" stroke="#c8b48a"/><rect x="0.5" y="0.5" width="15" height="2" fill="#5c8ac0"/><rect x="7.5" y="5.5" width="8" height="8" fill="#f2f2f2" stroke="#9a9a9a"/><rect x="9" y="10" width="1" height="2" fill="#3a9a3a"/><rect x="11" y="8" width="1" height="4" fill="#3a9a3a"/><rect x="13" y="9" width="1" height="3" fill="#3a9a3a"/></svg>
<svg style="left:75px;top:510px" width="17" height="13" viewBox="0 0 17 13"><rect x="0.5" y="0.5" width="15" height="11" fill="#8a8a7a" stroke="#a08060"/><rect x="0.5" y="0.5" width="15" height="2" fill="#4a78b0"/><rect x="2" y="4.0" width="2" height="2" fill="#22ee22"/><rect x="5" y="4.0" width="2" height="2" fill="#22ee22"/><rect x="8" y="4.0" width="2" height="2" fill="#22ee22"/><rect x="11" y="4.0" width="2" height="2" fill="#22ee22"/><rect x="14" y="4.0" width="2" height="2" fill="#22ee22"/><rect x="2" y="6.7" width="2" height="2" fill="#22ee22"/><rect x="5" y="6.7" width="2" height="2" fill="#22ee22"/><rect x="8" y="6.7" width="2" height="2" fill="#22ee22"/><rect x="11" y="6.7" width="2" height="2" fill="#22ee22"/><rect x="14" y="6.7" width="2" height="2" fill="#22ee22"/><rect x="2" y="9.4" width="2" height="2" fill="#22ee22"/><rect x="5" y="9.4" width="2" height="2" fill="#22ee22"/><rect x="8" y="9.4" width="2" height="2" fill="#22ee22"/><rect x="11" y="9.4" width="2" height="2" fill="#22ee22"/><rect x="14" y="9.4" width="2" height="2" fill="#22ee22"/></svg>
<svg style="left:161px;top:511px" width="11" height="10" viewBox="0 0 11 10"><path d="M0.5 0.5 L3 0.5 L5.5 3 L8 0.5 L10.5 0.5 L10.5 3 L8 5 L10.5 7 L10.5 9.5 L8 9.5 L5.5 7 L3 9.5 L0.5 9.5 L0.5 7 L3 5 L0.5 3 Z" fill="#fff" stroke="#000" stroke-width="1"/></svg>
<svg style="left:183px;top:510px" width="17" height="13" viewBox="0 0 17 13"><rect x="0.5" y="0.5" width="15" height="11" fill="#bfe0f0" stroke="#c0a888"/><rect x="0.5" y="0.5" width="15" height="2" fill="#8ab0d8"/><path d="M0.5 6.5 H15.5 M5.5 2.5 V11.5 M10.5 2.5 V11.5" stroke="#fff" stroke-width="1"/></svg>
<svg style="left:273px;top:509px" width="14" height="14" viewBox="0 0 14 14"><rect x="0.5" y="0.5" width="12" height="9" fill="#dfe8f2" stroke="#6a8ec0"/><path d="M3 3.5 H9 M3 5.5 H8" stroke="#6a8ec0"/><rect x="3" y="11" width="7" height="2" fill="#6a8ec0"/></svg>
<svg style="left:339px;top:510px" width="17" height="13" viewBox="0 0 17 13"><rect x="0.5" y="0.5" width="15" height="11" fill="#eaeef2" stroke="#c8b48a"/><rect x="0.5" y="0.5" width="15" height="2" fill="#8ab0d8"/><rect x="9.5" y="5.5" width="6" height="7" fill="#f4f4f4" stroke="#9a9a9a"/><path d="M11.5 7.5 V11 M13.5 7.5 V11" stroke="#6aaa6a"/></svg>
<svg style="left:695px;top:511px" width="16" height="11" viewBox="0 0 16 11"><path d="M1 1 L8 8 L6 10 L0 3 Z" fill="#e8d8a0" stroke="#8a7a50" stroke-width="0.8"/><rect x="10" y="8" width="2" height="2" fill="#000"/><rect x="13" y="8" width="2" height="2" fill="#000"/></svg>
<div style="position:absolute;left:721px;top:508px;width:1px;height:15px;background:#a09a8c;"></div>
<svg style="left:735px;top:508px" width="14" height="15" viewBox="0 0 14 15"><rect x="0.5" y="0.5" width="5" height="5" fill="#cfe4f8" stroke="#2a6ac8"/><rect x="0.5" y="9.5" width="5" height="5" fill="#cfe4f8" stroke="#2a6ac8"/><path d="M7 2.5 H13 M9 7.5 H13 M7 12.5 H13" stroke="#2a6ac8"/><rect x="6.5" y="6.5" width="2" height="2" fill="none" stroke="#2a6ac8" stroke-width="0.8"/></svg>
<svg style="left:759px;top:509px" width="17" height="15" viewBox="0 0 17 15"><circle cx="8.5" cy="2.5" r="2" fill="#d02020"/><path d="M10 3 Q10 7 7 8" stroke="#d02020" stroke-width="1.6" fill="none"/><path d="M1 12.5 H16 M1 12.5 L4 10 M1 12.5 L4 15 M16 12.5 L13 10 M16 12.5 L13 15" stroke="#208a30" stroke-width="1.4" fill="none"/></svg>
<svg style="left:785px;top:509px" width="17" height="15" viewBox="0 0 17 15"><path d="M1 6 V13.5 H15.5 V6 H13 V11 H3.5 V6 Z" fill="#e8dcb0" stroke="#a8a8a8" stroke-width="0.8"/><path d="M7 8 L13 2 M10 2 H13.5 V5.5" stroke="#208a30" stroke-width="1.3" fill="none"/></svg>
<svg style="left:819px;top:511px" width="12" height="6" viewBox="0 0 12 6"><path d="M1 0.8 H11 L6 5.2 Z" fill="#fff" stroke="#000" stroke-width="1.2"/></svg>
<div style="position:absolute;left:843px;top:511px;width:10px;height:4px;border:1px solid #000;"></div>
<div style="position:absolute;left:869px;top:511px;width:10px;height:10px;border:1px solid #000;"></div>
<div style="position:absolute;left:870px;top:513px;width:8px;height:1px;background:#000;"></div>
<div style="position:absolute;left:5px;top:532px;width:867px;height:262px;border:1px solid #8a8680;background:#fff;"></div>
<div style="position:absolute;left:6px;top:533px;width:865px;height:21px;background:#dcdad5;"></div>
<div style="position:absolute;left:6px;top:553px;width:865px;height:2px;background:#1a1a1a;"></div>
<div class="t" style="left:6px;top:538px;height:14px;line-height:14px;width:41px;text-align:center;overflow:hidden;">Name</div>
<div class="t" style="left:47px;top:538px;height:14px;line-height:14px;width:61px;text-align:center;overflow:hidden;">Start Time</div>
<div class="t" style="left:108px;top:538px;height:14px;line-height:14px;width:52px;text-align:center;overflow:hidden;">Duration</div>
<div class="t" style="left:160px;top:538px;height:14px;line-height:14px;width:53px;text-align:center;overflow:hidden;">Grid Size</div>
<div class="t" style="left:213px;top:538px;height:14px;line-height:14px;width:58px;text-align:center;overflow:hidden;">Block Size</div>
<div class="t" style="left:271px;top:538px;height:14px;line-height:14px;width:34px;text-align:center;overflow:hidden;">Regs</div>
<div class="t" style="left:305px;top:538px;height:14px;line-height:14px;width:73px;text-align:center;overflow:hidden;">Static SMem</div>
<div class="t" style="left:378px;top:538px;height:14px;line-height:14px;width:88px;text-align:center;overflow:hidden;">Dynamic SMem</div>
<div class="t" style="left:466px;top:538px;height:14px;line-height:14px;width:30px;text-align:center;overflow:hidden;">Size</div>
<div class="t" style="left:496px;top:538px;height:14px;line-height:14px;width:65px;text-align:center;overflow:hidden;">Throughput</div>
<div style="position:absolute;left:46px;top:534px;width:1px;height:20px;background:#111;"></div>
<div style="position:absolute;left:107px;top:534px;width:1px;height:20px;background:#111;"></div>
<div style="position:absolute;left:159px;top:534px;width:1px;height:20px;background:#111;"></div>
<div style="position:absolute;left:212px;top:534px;width:1px;height:20px;background:#111;"></div>
<div style="position:absolute;left:270px;top:534px;width:1px;height:20px;background:#111;"></div>
<div style="position:absolute;left:304px;top:534px;width:1px;height:20px;background:#111;"></div>
<div style="position:absolute;left:377px;top:534px;width:1px;height:20px;background:#111;"></div>
<div style="position:absolute;left:465px;top:534px;width:1px;height:20px;background:#111;"></div>
<div style="position:absolute;left:495px;top:534px;width:1px;height:20px;background:#111;"></div>
<div style="position:absolute;left:560px;top:534px;width:1px;height:20px;background:#111;"></div>
<div style="position:absolute;left:6px;top:534px;width:1px;height:19px;background:#f4f3f0;"></div>
<div style="position:absolute;left:47px;top:534px;width:1px;height:19px;background:#f4f3f0;"></div>
<div style="position:absolute;left:108px;top:534px;width:1px;height:19px;background:#f4f3f0;"></div>
<div style="position:absolute;left:160px;top:534px;width:1px;height:19px;background:#f4f3f0;"></div>
<div style="position:absolute;left:213px;top:534px;width:1px;height:19px;background:#f4f3f0;"></div>
<div style="position:absolute;left:271px;top:534px;width:1px;height:19px;background:#f4f3f0;"></div>
<div style="position:absolute;left:305px;top:534px;width:1px;height:19px;background:#f4f3f0;"></div>
<div style="position:absolute;left:378px;top:534px;width:1px;height:19px;background:#f4f3f0;"></div>
<div style="position:absolute;left:466px;top:534px;width:1px;height:19px;background:#f4f3f0;"></div>
<div style="position:absolute;left:496px;top:534px;width:1px;height:19px;background:#f4f3f0;"></div>
<div style="position:absolute;left:6px;top:533px;width:865px;height:1px;background:#f0efec;"></div>
<div style="position:absolute;left:870px;top:533px;width:1px;height:21px;background:#111;"></div>
<div style="position:absolute;left:6px;top:554px;width:865px;height:239px;overflow:hidden;">
<div class="t" style="left:0px;top:1px;width:40px;height:19px;line-height:19px;overflow:hidden;padding-left:7px;">Memcpy</div>
<div class="t" style="left:41px;top:1px;width:60px;height:19px;line-height:19px;overflow:hidden;direction:rtl;text-align:right;padding-right:5px;color:#000"><span style="direction:ltr;unicode-bidi:bidi-override">148.864 ms</span></div>
<div class="t" style="left:102px;top:1px;width:51px;height:19px;line-height:19px;overflow:hidden;direction:rtl;text-align:right;padding-right:5px;color:#000"><span style="direction:ltr;unicode-bidi:bidi-override">1.057 ms</span></div>
<div class="t" style="left:154px;top:1px;width:52px;height:19px;line-height:19px;overflow:hidden;direction:rtl;text-align:right;padding-right:5px;color:#6e6e6e"><span style="direction:ltr;unicode-bidi:bidi-override">n/a</span></div>
<div class="t" style="left:207px;top:1px;width:57px;height:19px;line-height:19px;overflow:hidden;direction:rtl;text-align:right;padding-right:5px;color:#6e6e6e"><span style="direction:ltr;unicode-bidi:bidi-override">n/a</span></div>
<div class="t" style="left:265px;top:1px;width:33px;height:19px;line-height:19px;overflow:hidden;direction:rtl;text-align:right;padding-right:5px;color:#6e6e6e"><span style="direction:ltr;unicode-bidi:bidi-override">n/a</span></div>
<div class="t" style="left:299px;top:1px;width:72px;height:19px;line-height:19px;overflow:hidden;direction:rtl;text-align:right;padding-right:5px;color:#6e6e6e"><span style="direction:ltr;unicode-bidi:bidi-override">n/a</span></div>
<div class="t" style="left:372px;top:1px;width:87px;height:19px;line-height:19px;overflow:hidden;direction:rtl;text-align:right;padding-right:5px;color:#6e6e6e"><span style="direction:ltr;unicode-bidi:bidi-override">n/a</span></div>
<div class="t" style="left:460px;top:1px;width:29px;height:19px;line-height:19px;overflow:hidden;direction:rtl;text-align:right;padding-right:5px;color:#000"><span style="direction:ltr;unicode-bidi:bidi-override">7.629 MB</span></div>
<div class="t" style="left:490px;top:1px;width:64px;height:19px;line-height:19px;overflow:hidden;direction:rtl;text-align:right;padding-right:5px;color:#000"><span style="direction:ltr;unicode-bidi:bidi-override">7.938 GB/s</span></div>
<div style="position:absolute;left:1px;top:20px;width:864px;height:19px;background:#eeedf0;"></div>
<div class="t" style="left:0px;top:20px;width:40px;height:19px;line-height:19px;overflow:hidden;padding-left:7px;">Memcpy</div>
<div class="t" style="left:41px;top:20px;width:60px;height:19px;line-height:19px;overflow:hidden;direction:rtl;text-align:right;padding-right:5px;color:#000"><span style="direction:ltr;unicode-bidi:bidi-override">153.346 ms</span></div>
<div class="t" style="left:102px;top:20px;width:51px;height:19px;line-height:19px;overflow:hidden;direction:rtl;text-align:right;padding-right:5px;color:#000"><span style="direction:ltr;unicode-bidi:bidi-override">852.355 µs</span></div>
<div class="t" style="left:154px;top:20px;width:52px;height:19px;line-height:19px;overflow:hidden;direction:rtl;text-align:right;padding-right:5px;color:#6e6e6e"><span style="direction:ltr;unicode-bidi:bidi-override">n/a</span></div>
<div class="t" style="left:207px;top:20px;width:57px;height:19px;line-height:19px;overflow:hidden;direction:rtl;text-align:right;padding-right:5px;color:#6e6e6e"><span style="direction:ltr;unicode-bidi:bidi-override">n/a</span></div>
<div class="t" style="left:265px;top:20px;width:33px;height:19px;line-height:19px;overflow:hidden;direction:rtl;text-align:right;padding-right:5px;color:#6e6e6e"><span style="direction:ltr;unicode-bidi:bidi-override">n/a</span></div>
<div class="t" style="left:299px;top:20px;width:72px;height:19px;line-height:19px;overflow:hidden;direction:rtl;text-align:right;padding-right:5px;color:#6e6e6e"><span style="direction:ltr;unicode-bidi:bidi-override">n/a</span></div>
<div class="t" style="left:372px;top:20px;width:87px;height:19px;line-height:19px;overflow:hidden;direction:rtl;text-align:right;padding-right:5px;color:#6e6e6e"><span style="direction:ltr;unicode-bidi:bidi-override">n/a</span></div>
<div class="t" style="left:460px;top:20px;width:29px;height:19px;line-height:19px;overflow:hidden;direction:rtl;text-align:right;padding-right:5px;color:#000"><span style="direction:ltr;unicode-bidi:bidi-override">7.629 MB</span></div>
<div class="t" style="left:490px;top:20px;width:64px;height:19px;line-height:19px;overflow:hidden;direction:rtl;text-align:right;padding-right:5px;color:#000"><span style="direction:ltr;unicode-bidi:bidi-override">8.808 GB/s</span></div>
<div class="t" style="left:0px;top:39px;width:40px;height:19px;line-height:19px;overflow:hidden;padding-left:7px;">Memcpy</div>
<div class="t" style="left:41px;top:39px;width:60px;height:19px;line-height:19px;overflow:hidden;direction:rtl;text-align:right;padding-right:5px;color:#000"><span style="direction:ltr;unicode-bidi:bidi-override">154.594 ms</span></div>
<div class="t" style="left:102px;top:39px;width:51px;height:19px;line-height:19px;overflow:hidden;direction:rtl;text-align:right;padding-right:5px;color:#000"><span style="direction:ltr;unicode-bidi:bidi-override">1.631 µs</span></div>
<div class="t" style="left:154px;top:39px;width:52px;height:19px;line-height:19px;overflow:hidden;direction:rtl;text-align:right;padding-right:5px;color:#6e6e6e"><span style="direction:ltr;unicode-bidi:bidi-override">n/a</span></div>
<div class="t" style="left:207px;top:39px;width:57px;height:19px;line-height:19px;overflow:hidden;direction:rtl;text-align:right;padding-right:5px;color:#6e6e6e"><span style="direction:ltr;unicode-bidi:bidi-override">n/a</span></div>
<div class="t" style="left:265px;top:39px;width:33px;height:19px;line-height:19px;overflow:hidden;direction:rtl;text-align:right;padding-right:5px;color:#6e6e6e"><span style="direction:ltr;unicode-bidi:bidi-override">n/a</span></div>
<div class="t" style="left:299px;top:39px;width:72px;height:19px;line-height:19px;overflow:hidden;direction:rtl;text-align:right;padding-right:5px;color:#6e6e6e"><span style="direction:ltr;unicode-bidi:bidi-override">n/a</span></div>
<div class="t" style="left:372px;top:39px;width:87px;height:19px;line-height:19px;overflow:hidden;direction:rtl;text-align:right;padding-right:5px;color:#6e6e6e"><span style="direction:ltr;unicode-bidi:bidi-override">n/a</span></div>
<div class="t" style="left:460px;top:39px;width:29px;height:19px;line-height:19px;overflow:hidden;direction:rtl;text-align:right;padding-right:5px;color:#000"><span style="direction:ltr;unicode-bidi:bidi-override">8 B</span></div>
<div class="t" style="left:490px;top:39px;width:64px;height:19px;line-height:19px;overflow:hidden;direction:rtl;text-align:right;padding-right:5px;color:#000"><span style="direction:ltr;unicode-bidi:bidi-override">4.905 MB/s</span></div>
<div style="position:absolute;left:1px;top:58px;width:864px;height:19px;background:#eeedf0;"></div>
<div class="t" style="left:0px;top:58px;width:40px;height:19px;line-height:19px;overflow:hidden;padding-left:7px;">calcNext</div>
<div class="t" style="left:41px;top:58px;width:60px;height:19px;line-height:19px;overflow:hidden;direction:rtl;text-align:right;padding-right:5px;color:#000"><span style="direction:ltr;unicode-bidi:bidi-override">154.798 ms</span></div>
<div class="t" style="left:102px;top:58px;width:51px;height:19px;line-height:19px;overflow:hidden;direction:rtl;text-align:right;padding-right:5px;color:#000"><span style="direction:ltr;unicode-bidi:bidi-override">282.99 µs</span></div>
<div class="t" style="left:154px;top:58px;width:52px;height:19px;line-height:19px;overflow:hidden;direction:rtl;text-align:right;padding-right:5px;color:#000"><span style="direction:ltr;unicode-bidi:bidi-override">[1022,1,1]</span></div>
<div class="t" style="left:207px;top:58px;width:57px;height:19px;line-height:19px;overflow:hidden;direction:rtl;text-align:right;padding-right:5px;color:#000"><span style="direction:ltr;unicode-bidi:bidi-override">[128,1,1]</span></div>
<div class="t" style="left:265px;top:58px;width:33px;height:19px;line-height:19px;overflow:hidden;direction:rtl;text-align:right;padding-right:5px;color:#000"><span style="direction:ltr;unicode-bidi:bidi-override">29</span></div>
<div class="t" style="left:299px;top:58px;width:72px;height:19px;line-height:19px;overflow:hidden;direction:rtl;text-align:right;padding-right:5px;color:#000"><span style="direction:ltr;unicode-bidi:bidi-override">0</span></div>
<div class="t" style="left:372px;top:58px;width:87px;height:19px;line-height:19px;overflow:hidden;direction:rtl;text-align:right;padding-right:5px;color:#000"><span style="direction:ltr;unicode-bidi:bidi-override">2048</span></div>
<div class="t" style="left:460px;top:58px;width:29px;height:19px;line-height:19px;overflow:hidden;direction:rtl;text-align:right;padding-right:5px;color:#6e6e6e"><span style="direction:ltr;unicode-bidi:bidi-override">n/a</span></div>
<div class="t" style="left:490px;top:58px;width:64px;height:19px;line-height:19px;overflow:hidden;direction:rtl;text-align:right;padding-right:5px;color:#6e6e6e"><span style="direction:ltr;unicode-bidi:bidi-override">n/a</span></div>
<div class="t" style="left:0px;top:77px;width:40px;height:19px;line-height:19px;overflow:hidden;padding-left:7px;">calcNext</div>
<div class="t" style="left:41px;top:77px;width:60px;height:19px;line-height:19px;overflow:hidden;direction:rtl;text-align:right;padding-right:5px;color:#000"><span style="direction:ltr;unicode-bidi:bidi-override">155.084 ms</span></div>
<div class="t" style="left:102px;top:77px;width:51px;height:19px;line-height:19px;overflow:hidden;direction:rtl;text-align:right;padding-right:5px;color:#000"><span style="direction:ltr;unicode-bidi:bidi-override">5.568 µs</span></div>
<div class="t" style="left:154px;top:77px;width:52px;height:19px;line-height:19px;overflow:hidden;direction:rtl;text-align:right;padding-right:5px;color:#000"><span style="direction:ltr;unicode-bidi:bidi-override">[1,1,1]</span></div>
<div class="t" style="left:207px;top:77px;width:57px;height:19px;line-height:19px;overflow:hidden;direction:rtl;text-align:right;padding-right:5px;color:#000"><span style="direction:ltr;unicode-bidi:bidi-override">[256,1,1]</span></div>
<div class="t" style="left:265px;top:77px;width:33px;height:19px;line-height:19px;overflow:hidden;direction:rtl;text-align:right;padding-right:5px;color:#000"><span style="direction:ltr;unicode-bidi:bidi-override">18</span></div>
<div class="t" style="left:299px;top:77px;width:72px;height:19px;line-height:19px;overflow:hidden;direction:rtl;text-align:right;padding-right:5px;color:#000"><span style="direction:ltr;unicode-bidi:bidi-override">0</span></div>
<div class="t" style="left:372px;top:77px;width:87px;height:19px;line-height:19px;overflow:hidden;direction:rtl;text-align:right;padding-right:5px;color:#000"><span style="direction:ltr;unicode-bidi:bidi-override">2048</span></div>
<div class="t" style="left:460px;top:77px;width:29px;height:19px;line-height:19px;overflow:hidden;direction:rtl;text-align:right;padding-right:5px;color:#6e6e6e"><span style="direction:ltr;unicode-bidi:bidi-override">n/a</span></div>
<div class="t" style="left:490px;top:77px;width:64px;height:19px;line-height:19px;overflow:hidden;direction:rtl;text-align:right;padding-right:5px;color:#6e6e6e"><span style="direction:ltr;unicode-bidi:bidi-override">n/a</span></div>
<div style="position:absolute;left:1px;top:96px;width:864px;height:19px;background:#eeedf0;"></div>
<div class="t" style="left:0px;top:96px;width:40px;height:19px;line-height:19px;overflow:hidden;padding-left:7px;">Memcpy</div>
<div class="t" style="left:41px;top:96px;width:60px;height:19px;line-height:19px;overflow:hidden;direction:rtl;text-align:right;padding-right:5px;color:#000"><span style="direction:ltr;unicode-bidi:bidi-override">155.095 ms</span></div>
<div class="t" style="left:102px;top:96px;width:51px;height:19px;line-height:19px;overflow:hidden;direction:rtl;text-align:right;padding-right:5px;color:#000"><span style="direction:ltr;unicode-bidi:bidi-override">2.88 µs</span></div>
<div class="t" style="left:154px;top:96px;width:52px;height:19px;line-height:19px;overflow:hidden;direction:rtl;text-align:right;padding-right:5px;color:#6e6e6e"><span style="direction:ltr;unicode-bidi:bidi-override">n/a</span></div>
<div class="t" style="left:207px;top:96px;width:57px;height:19px;line-height:19px;overflow:hidden;direction:rtl;text-align:right;padding-right:5px;color:#6e6e6e"><span style="direction:ltr;unicode-bidi:bidi-override">n/a</span></div>
<div class="t" style="left:265px;top:96px;width:33px;height:19px;line-height:19px;overflow:hidden;direction:rtl;text-align:right;padding-right:5px;color:#6e6e6e"><span style="direction:ltr;unicode-bidi:bidi-override">n/a</span></div>
<div class="t" style="left:299px;top:96px;width:72px;height:19px;line-height:19px;overflow:hidden;direction:rtl;text-align:right;padding-right:5px;color:#6e6e6e"><span style="direction:ltr;unicode-bidi:bidi-override">n/a</span></div>
<div class="t" style="left:372px;top:96px;width:87px;height:19px;line-height:19px;overflow:hidden;direction:rtl;text-align:right;padding-right:5px;color:#6e6e6e"><span style="direction:ltr;unicode-bidi:bidi-override">n/a</span></div>
<div class="t" style="left:460px;top:96px;width:29px;height:19px;line-height:19px;overflow:hidden;direction:rtl;text-align:right;padding-right:5px;color:#000"><span style="direction:ltr;unicode-bidi:bidi-override">8 B</span></div>
<div class="t" style="left:490px;top:96px;width:64px;height:19px;line-height:19px;overflow:hidden;direction:rtl;text-align:right;padding-right:5px;color:#000"><span style="direction:ltr;unicode-bidi:bidi-override">2.778 MB/s</span></div>
<div class="t" style="left:0px;top:115px;width:40px;height:19px;line-height:19px;overflow:hidden;padding-left:7px;">Memcpy</div>
<div class="t" style="left:41px;top:115px;width:60px;height:19px;line-height:19px;overflow:hidden;direction:rtl;text-align:right;padding-right:5px;color:#000"><span style="direction:ltr;unicode-bidi:bidi-override">155.163 ms</span></div>
<div class="t" style="left:102px;top:115px;width:51px;height:19px;line-height:19px;overflow:hidden;direction:rtl;text-align:right;padding-right:5px;color:#000"><span style="direction:ltr;unicode-bidi:bidi-override">1.127 ms</span></div>
<div class="t" style="left:154px;top:115px;width:52px;height:19px;line-height:19px;overflow:hidden;direction:rtl;text-align:right;padding-right:5px;color:#6e6e6e"><span style="direction:ltr;unicode-bidi:bidi-override">n/a</span></div>
<div class="t" style="left:207px;top:115px;width:57px;height:19px;line-height:19px;overflow:hidden;direction:rtl;text-align:right;padding-right:5px;color:#6e6e6e"><span style="direction:ltr;unicode-bidi:bidi-override">n/a</span></div>
<div class="t" style="left:265px;top:115px;width:33px;height:19px;line-height:19px;overflow:hidden;direction:rtl;text-align:right;padding-right:5px;color:#6e6e6e"><span style="direction:ltr;unicode-bidi:bidi-override">n/a</span></div>
<div class="t" style="left:299px;top:115px;width:72px;height:19px;line-height:19px;overflow:hidden;direction:rtl;text-align:right;padding-right:5px;color:#6e6e6e"><span style="direction:ltr;unicode-bidi:bidi-override">n/a</span></div>
<div class="t" style="left:372px;top:115px;width:87px;height:19px;line-height:19px;overflow:hidden;direction:rtl;text-align:right;padding-right:5px;color:#6e6e6e"><span style="direction:ltr;unicode-bidi:bidi-override">n/a</span></div>
<div class="t" style="left:460px;top:115px;width:29px;height:19px;line-height:19px;overflow:hidden;direction:rtl;text-align:right;padding-right:5px;color:#000"><span style="direction:ltr;unicode-bidi:bidi-override">7.629 MB</span></div>
<div class="t" style="left:490px;top:115px;width:64px;height:19px;line-height:19px;overflow:hidden;direction:rtl;text-align:right;padding-right:5px;color:#000"><span style="direction:ltr;unicode-bidi:bidi-override">7.446 GB/s</span></div>
<div style="position:absolute;left:1px;top:134px;width:864px;height:19px;background:#eeedf0;"></div>
<div class="t" style="left:0px;top:134px;width:40px;height:19px;line-height:19px;overflow:hidden;padding-left:7px;">Memcpy</div>
<div class="t" style="left:41px;top:134px;width:60px;height:19px;line-height:19px;overflow:hidden;direction:rtl;text-align:right;padding-right:5px;color:#000"><span style="direction:ltr;unicode-bidi:bidi-override">160.383 ms</span></div>
<div class="t" style="left:102px;top:134px;width:51px;height:19px;line-height:19px;overflow:hidden;direction:rtl;text-align:right;padding-right:5px;color:#000"><span style="direction:ltr;unicode-bidi:bidi-override">1.066 ms</span></div>
<div class="t" style="left:154px;top:134px;width:52px;height:19px;line-height:19px;overflow:hidden;direction:rtl;text-align:right;padding-right:5px;color:#6e6e6e"><span style="direction:ltr;unicode-bidi:bidi-override">n/a</span></div>
<div class="t" style="left:207px;top:134px;width:57px;height:19px;line-height:19px;overflow:hidden;direction:rtl;text-align:right;padding-right:5px;color:#6e6e6e"><span style="direction:ltr;unicode-bidi:bidi-override">n/a</span></div>
<div class="t" style="left:265px;top:134px;width:33px;height:19px;line-height:19px;overflow:hidden;direction:rtl;text-align:right;padding-right:5px;color:#6e6e6e"><span style="direction:ltr;unicode-bidi:bidi-override">n/a</span></div>
<div class="t" style="left:299px;top:134px;width:72px;height:19px;line-height:19px;overflow:hidden;direction:rtl;text-align:right;padding-right:5px;color:#6e6e6e"><span style="direction:ltr;unicode-bidi:bidi-override">n/a</span></div>
<div class="t" style="left:372px;top:134px;width:87px;height:19px;line-height:19px;overflow:hidden;direction:rtl;text-align:right;padding-right:5px;color:#6e6e6e"><span style="direction:ltr;unicode-bidi:bidi-override">n/a</span></div>
<div class="t" style="left:460px;top:134px;width:29px;height:19px;line-height:19px;overflow:hidden;direction:rtl;text-align:right;padding-right:5px;color:#000"><span style="direction:ltr;unicode-bidi:bidi-override">7.629 MB</span></div>
<div class="t" style="left:490px;top:134px;width:64px;height:19px;line-height:19px;overflow:hidden;direction:rtl;text-align:right;padding-right:5px;color:#000"><span style="direction:ltr;unicode-bidi:bidi-override">7.872 GB/s</span></div>
<div class="t" style="left:0px;top:153px;width:40px;height:19px;line-height:19px;overflow:hidden;padding-left:7px;">Memcpy</div>
<div class="t" style="left:41px;top:153px;width:60px;height:19px;line-height:19px;overflow:hidden;direction:rtl;text-align:right;padding-right:5px;color:#000"><span style="direction:ltr;unicode-bidi:bidi-override">169.037 ms</span></div>
<div class="t" style="left:102px;top:153px;width:51px;height:19px;line-height:19px;overflow:hidden;direction:rtl;text-align:right;padding-right:5px;color:#000"><span style="direction:ltr;unicode-bidi:bidi-override">1.119 ms</span></div>
<div class="t" style="left:154px;top:153px;width:52px;height:19px;line-height:19px;overflow:hidden;direction:rtl;text-align:right;padding-right:5px;color:#6e6e6e"><span style="direction:ltr;unicode-bidi:bidi-override">n/a</span></div>
<div class="t" style="left:207px;top:153px;width:57px;height:19px;line-height:19px;overflow:hidden;direction:rtl;text-align:right;padding-right:5px;color:#6e6e6e"><span style="direction:ltr;unicode-bidi:bidi-override">n/a</span></div>
<div class="t" style="left:265px;top:153px;width:33px;height:19px;line-height:19px;overflow:hidden;direction:rtl;text-align:right;padding-right:5px;color:#6e6e6e"><span style="direction:ltr;unicode-bidi:bidi-override">n/a</span></div>
<div class="t" style="left:299px;top:153px;width:72px;height:19px;line-height:19px;overflow:hidden;direction:rtl;text-align:right;padding-right:5px;color:#6e6e6e"><span style="direction:ltr;unicode-bidi:bidi-override">n/a</span></div>
<div class="t" style="left:372px;top:153px;width:87px;height:19px;line-height:19px;overflow:hidden;direction:rtl;text-align:right;padding-right:5px;color:#6e6e6e"><span style="direction:ltr;unicode-bidi:bidi-override">n/a</span></div>
<div class="t" style="left:460px;top:153px;width:29px;height:19px;line-height:19px;overflow:hidden;direction:rtl;text-align:right;padding-right:5px;color:#000"><span style="direction:ltr;unicode-bidi:bidi-override">7.629 MB</span></div>
<div class="t" style="left:490px;top:153px;width:64px;height:19px;line-height:19px;overflow:hidden;direction:rtl;text-align:right;padding-right:5px;color:#000"><span style="direction:ltr;unicode-bidi:bidi-override">7.497 GB/s</span></div>
<div style="position:absolute;left:1px;top:172px;width:864px;height:19px;background:#eeedf0;"></div>
<div class="t" style="left:0px;top:172px;width:40px;height:19px;line-height:19px;overflow:hidden;padding-left:7px;">Memcpy</div>
<div class="t" style="left:41px;top:172px;width:60px;height:19px;line-height:19px;overflow:hidden;direction:rtl;text-align:right;padding-right:5px;color:#000"><span style="direction:ltr;unicode-bidi:bidi-override">172.651 ms</span></div>
<div class="t" style="left:102px;top:172px;width:51px;height:19px;line-height:19px;overflow:hidden;direction:rtl;text-align:right;padding-right:5px;color:#000"><span style="direction:ltr;unicode-bidi:bidi-override">893.249 µs</span></div>
<div class="t" style="left:154px;top:172px;width:52px;height:19px;line-height:19px;overflow:hidden;direction:rtl;text-align:right;padding-right:5px;color:#6e6e6e"><span style="direction:ltr;unicode-bidi:bidi-override">n/a</span></div>
<div class="t" style="left:207px;top:172px;width:57px;height:19px;line-height:19px;overflow:hidden;direction:rtl;text-align:right;padding-right:5px;color:#6e6e6e"><span style="direction:ltr;unicode-bidi:bidi-override">n/a</span></div>
<div class="t" style="left:265px;top:172px;width:33px;height:19px;line-height:19px;overflow:hidden;direction:rtl;text-align:right;padding-right:5px;color:#6e6e6e"><span style="direction:ltr;unicode-bidi:bidi-override">n/a</span></div>
<div class="t" style="left:299px;top:172px;width:72px;height:19px;line-height:19px;overflow:hidden;direction:rtl;text-align:right;padding-right:5px;color:#6e6e6e"><span style="direction:ltr;unicode-bidi:bidi-override">n/a</span></div>
<div class="t" style="left:372px;top:172px;width:87px;height:19px;line-height:19px;overflow:hidden;direction:rtl;text-align:right;padding-right:5px;color:#6e6e6e"><span style="direction:ltr;unicode-bidi:bidi-override">n/a</span></div>
<div class="t" style="left:460px;top:172px;width:29px;height:19px;line-height:19px;overflow:hidden;direction:rtl;text-align:right;padding-right:5px;color:#000"><span style="direction:ltr;unicode-bidi:bidi-override">7.629 MB</span></div>
<div class="t" style="left:490px;top:172px;width:64px;height:19px;line-height:19px;overflow:hidden;direction:rtl;text-align:right;padding-right:5px;color:#000"><span style="direction:ltr;unicode-bidi:bidi-override">8.446 GB/s</span></div>
<div class="t" style="left:0px;top:191px;width:40px;height:19px;line-height:19px;overflow:hidden;padding-left:7px;">swap_63</div>
<div class="t" style="left:41px;top:191px;width:60px;height:19px;line-height:19px;overflow:hidden;direction:rtl;text-align:right;padding-right:5px;color:#000"><span style="direction:ltr;unicode-bidi:bidi-override">173.727 ms</span></div>
<div class="t" style="left:102px;top:191px;width:51px;height:19px;line-height:19px;overflow:hidden;direction:rtl;text-align:right;padding-right:5px;color:#000"><span style="direction:ltr;unicode-bidi:bidi-override">850.678 µs</span></div>
<div class="t" style="left:154px;top:191px;width:52px;height:19px;line-height:19px;overflow:hidden;direction:rtl;text-align:right;padding-right:5px;color:#000"><span style="direction:ltr;unicode-bidi:bidi-override">[1022,1,1]</span></div>
<div class="t" style="left:207px;top:191px;width:57px;height:19px;line-height:19px;overflow:hidden;direction:rtl;text-align:right;padding-right:5px;color:#000"><span style="direction:ltr;unicode-bidi:bidi-override">[128,1,1]</span></div>
<div class="t" style="left:265px;top:191px;width:33px;height:19px;line-height:19px;overflow:hidden;direction:rtl;text-align:right;padding-right:5px;color:#000"><span style="direction:ltr;unicode-bidi:bidi-override">18</span></div>
<div class="t" style="left:299px;top:191px;width:72px;height:19px;line-height:19px;overflow:hidden;direction:rtl;text-align:right;padding-right:5px;color:#000"><span style="direction:ltr;unicode-bidi:bidi-override">0</span></div>
<div class="t" style="left:372px;top:191px;width:87px;height:19px;line-height:19px;overflow:hidden;direction:rtl;text-align:right;padding-right:5px;color:#000"><span style="direction:ltr;unicode-bidi:bidi-override">0</span></div>
<div class="t" style="left:460px;top:191px;width:29px;height:19px;line-height:19px;overflow:hidden;direction:rtl;text-align:right;padding-right:5px;color:#6e6e6e"><span style="direction:ltr;unicode-bidi:bidi-override">n/a</span></div>
<div class="t" style="left:490px;top:191px;width:64px;height:19px;line-height:19px;overflow:hidden;direction:rtl;text-align:right;padding-right:5px;color:#6e6e6e"><span style="direction:ltr;unicode-bidi:bidi-override">n/a</span></div>
<div style="position:absolute;left:1px;top:210px;width:864px;height:19px;background:#eeedf0;"></div>
<div class="t" style="left:0px;top:210px;width:40px;height:19px;line-height:19px;overflow:hidden;padding-left:7px;">Memcpy</div>
<div class="t" style="left:41px;top:210px;width:60px;height:19px;line-height:19px;overflow:hidden;direction:rtl;text-align:right;padding-right:5px;color:#000"><span style="direction:ltr;unicode-bidi:bidi-override">173.93 ms</span></div>
<div class="t" style="left:102px;top:210px;width:51px;height:19px;line-height:19px;overflow:hidden;direction:rtl;text-align:right;padding-right:5px;color:#000"><span style="direction:ltr;unicode-bidi:bidi-override">1.119 ms</span></div>
<div class="t" style="left:154px;top:210px;width:52px;height:19px;line-height:19px;overflow:hidden;direction:rtl;text-align:right;padding-right:5px;color:#6e6e6e"><span style="direction:ltr;unicode-bidi:bidi-override">n/a</span></div>
<div class="t" style="left:207px;top:210px;width:57px;height:19px;line-height:19px;overflow:hidden;direction:rtl;text-align:right;padding-right:5px;color:#6e6e6e"><span style="direction:ltr;unicode-bidi:bidi-override">n/a</span></div>
<div class="t" style="left:265px;top:210px;width:33px;height:19px;line-height:19px;overflow:hidden;direction:rtl;text-align:right;padding-right:5px;color:#6e6e6e"><span style="direction:ltr;unicode-bidi:bidi-override">n/a</span></div>
<div class="t" style="left:299px;top:210px;width:72px;height:19px;line-height:19px;overflow:hidden;direction:rtl;text-align:right;padding-right:5px;color:#6e6e6e"><span style="direction:ltr;unicode-bidi:bidi-override">n/a</span></div>
<div class="t" style="left:372px;top:210px;width:87px;height:19px;line-height:19px;overflow:hidden;direction:rtl;text-align:right;padding-right:5px;color:#6e6e6e"><span style="direction:ltr;unicode-bidi:bidi-override">n/a</span></div>
<div class="t" style="left:460px;top:210px;width:29px;height:19px;line-height:19px;overflow:hidden;direction:rtl;text-align:right;padding-right:5px;color:#000"><span style="direction:ltr;unicode-bidi:bidi-override">7.629 MB</span></div>
<div class="t" style="left:490px;top:210px;width:64px;height:19px;line-height:19px;overflow:hidden;direction:rtl;text-align:right;padding-right:5px;color:#000"><span style="direction:ltr;unicode-bidi:bidi-override">7.499 GB/s</span></div>
<div class="t" style="left:0px;top:229px;width:40px;height:19px;line-height:19px;overflow:hidden;padding-left:7px;">Memcpy</div>
<div class="t" style="left:41px;top:229px;width:60px;height:19px;line-height:19px;overflow:hidden;direction:rtl;text-align:right;padding-right:5px;color:#000"><span style="direction:ltr;unicode-bidi:bidi-override">179.163 ms</span></div>
<div class="t" style="left:102px;top:229px;width:51px;height:19px;line-height:19px;overflow:hidden;direction:rtl;text-align:right;padding-right:5px;color:#000"><span style="direction:ltr;unicode-bidi:bidi-override">1.073 ms</span></div>
<div class="t" style="left:154px;top:229px;width:52px;height:19px;line-height:19px;overflow:hidden;direction:rtl;text-align:right;padding-right:5px;color:#6e6e6e"><span style="direction:ltr;unicode-bidi:bidi-override">n/a</span></div>
<div class="t" style="left:207px;top:229px;width:57px;height:19px;line-height:19px;overflow:hidden;direction:rtl;text-align:right;padding-right:5px;color:#6e6e6e"><span style="direction:ltr;unicode-bidi:bidi-override">n/a</span></div>
<div class="t" style="left:265px;top:229px;width:33px;height:19px;line-height:19px;overflow:hidden;direction:rtl;text-align:right;padding-right:5px;color:#6e6e6e"><span style="direction:ltr;unicode-bidi:bidi-override">n/a</span></div>
<div class="t" style="left:299px;top:229px;width:72px;height:19px;line-height:19px;overflow:hidden;direction:rtl;text-align:right;padding-right:5px;color:#6e6e6e"><span style="direction:ltr;unicode-bidi:bidi-override">n/a</span></div>
<div class="t" style="left:372px;top:229px;width:87px;height:19px;line-height:19px;overflow:hidden;direction:rtl;text-align:right;padding-right:5px;color:#6e6e6e"><span style="direction:ltr;unicode-bidi:bidi-override">n/a</span></div>
<div class="t" style="left:460px;top:229px;width:29px;height:19px;line-height:19px;overflow:hidden;direction:rtl;text-align:right;padding-right:5px;color:#000"><span style="direction:ltr;unicode-bidi:bidi-override">7.629 MB</span></div>
<div class="t" style="left:490px;top:229px;width:64px;height:19px;line-height:19px;overflow:hidden;direction:rtl;text-align:right;padding-right:5px;color:#000"><span style="direction:ltr;unicode-bidi:bidi-override">7.818 GB/s</span></div>
<div style="position:absolute;left:40px;top:0;width:1px;height:239px;background:repeating-linear-gradient(#000 0 1px,transparent 1px 2px);"></div>
<div style="position:absolute;left:101px;top:0;width:1px;height:239px;background:repeating-linear-gradient(#000 0 1px,transparent 1px 2px);"></div>
<div style="position:absolute;left:153px;top:0;width:1px;height:239px;background:repeating-linear-gradient(#000 0 1px,transparent 1px 2px);"></div>
<div style="position:absolute;left:206px;top:0;width:1px;height:239px;background:repeating-linear-gradient(#000 0 1px,transparent 1px 2px);"></div>
<div style="position:absolute;left:264px;top:0;width:1px;height:239px;background:repeating-linear-gradient(#000 0 1px,transparent 1px 2px);"></div>
<div style="position:absolute;left:298px;top:0;width:1px;height:239px;background:repeating-linear-gradient(#000 0 1px,transparent 1px 2px);"></div>
<div style="position:absolute;left:371px;top:0;width:1px;height:239px;background:repeating-linear-gradient(#000 0 1px,transparent 1px 2px);"></div>
<div style="position:absolute;left:459px;top:0;width:1px;height:239px;background:repeating-linear-gradient(#000 0 1px,transparent 1px 2px);"></div>
<div style="position:absolute;left:489px;top:0;width:1px;height:239px;background:repeating-linear-gradient(#000 0 1px,transparent 1px 2px);"></div>
<div style="position:absolute;left:554px;top:0;width:1px;height:239px;background:repeating-linear-gradient(#000 0 1px,transparent 1px 2px);"></div>
</div>
<div style="position:absolute;left:873px;top:532px;width:3px;height:262px;background:#dcdad5;border-left:1px solid #f4f4f4;"></div>
<div style="position:absolute;left:876px;top:532px;width:15px;height:262px;background:#c6c4be;"></div>
<div style="position:absolute;left:876px;top:532px;width:15px;height:15px;background:#dcdad5;border-right:1px solid #000;border-bottom:1px solid #000;border-top:1px solid #fff;border-left:1px solid #fff;"></div>
<svg style="left:880px;top:537px" width="7" height="4" viewBox="0 0 7 4"><path d="M0 4 L3.5 0.5 L7 4Z" fill="#555"/></svg>
<div style="position:absolute;left:876px;top:547px;width:15px;height:21px;background:#dcdad5;border-right:1px solid #000;border-bottom:1px solid #000;border-top:1px solid #fff;border-left:1px solid #fff;"></div>
<div style="position:absolute;left:876px;top:780px;width:15px;height:14px;background:#dcdad5;border-right:1px solid #000;border-bottom:1px solid #000;border-top:1px solid #fff;border-left:1px solid #fff;"></div>
<svg style="left:880px;top:785px" width="7" height="4" viewBox="0 0 7 4"><path d="M0 0 L3.5 3.5 L7 0Z" fill="#000"/></svg>
<div style="position:absolute;left:899px;top:501px;width:297px;height:297px;background:#fff;border-radius:6px 6px 6px 6px;"></div>
<div style="position:absolute;left:899px;top:501px;width:100px;height:30px;border-radius:6px 6px 0 0;background:linear-gradient(#dcdfe7,#f2f3f6 70%,#fff);"></div>
<svg style="left:906px;top:510px" width="14" height="12" viewBox="0 0 14 12"><rect x="0.5" y="0.5" width="12" height="10" fill="#f0f4fa" stroke="#6a84a8"/><path d="M1 3 H12 M1 5.2 H12 M1 7.4 H12 M4.5 1 V10" stroke="#9ab0cc" stroke-width="0.8"/></svg>
<div class="t" style="left:924px;top:510px;height:14px;line-height:14px;">Properties</div>
<svg style="left:981px;top:511px" width="11" height="10" viewBox="0 0 11 10"><path d="M0.5 0.5 L3 0.5 L5.5 3 L8 0.5 L10.5 0.5 L10.5 3 L8 5 L10.5 7 L10.5 9.5 L8 9.5 L5.5 7 L3 9.5 L0.5 9.5 L0.5 7 L3 5 L0.5 3 Z" fill="#fff" stroke="#000" stroke-width="1"/></svg>
<div style="position:absolute;left:1144px;top:511px;width:10px;height:4px;border:1px solid #000;"></div>
<div style="position:absolute;left:1171px;top:511px;width:10px;height:10px;border:1px solid #000;"></div>
<div style="position:absolute;left:1172px;top:513px;width:8px;height:1px;background:#000;"></div>
<div class="t" style="left:902px;top:552px;height:14px;line-height:14px;">Select or highlight a single interval to see properties</div>
<div style="position:absolute;left:902px;top:569px;width:292px;height:225px;border:1px solid #8a8680;background:#fff;"></div>
</div></body></html>
